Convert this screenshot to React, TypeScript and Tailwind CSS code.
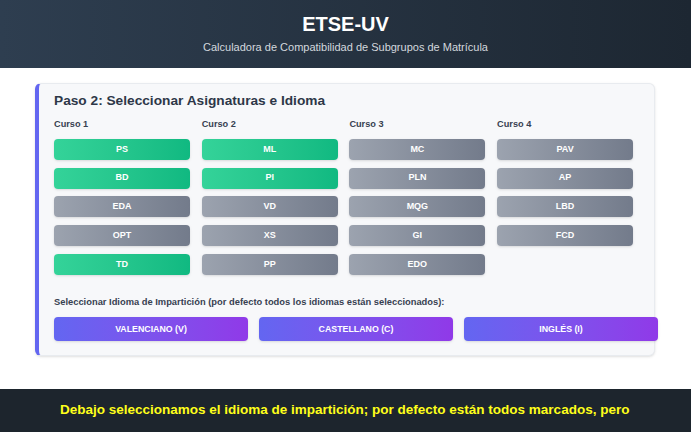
import React from 'react';

type Subject = { code: string; selected: boolean };

const cursos: { name: string; subjects: Subject[] }[] = [
  {
    name: 'Curso 1',
    subjects: [
      { code: 'PS', selected: true },
      { code: 'BD', selected: true },
      { code: 'EDA', selected: false },
      { code: 'OPT', selected: false },
      { code: 'TD', selected: true },
    ],
  },
  {
    name: 'Curso 2',
    subjects: [
      { code: 'ML', selected: true },
      { code: 'PI', selected: true },
      { code: 'VD', selected: false },
      { code: 'XS', selected: false },
      { code: 'PP', selected: false },
    ],
  },
  {
    name: 'Curso 3',
    subjects: [
      { code: 'MC', selected: false },
      { code: 'PLN', selected: false },
      { code: 'MQG', selected: false },
      { code: 'GI', selected: false },
      { code: 'EDO', selected: false },
    ],
  },
  {
    name: 'Curso 4',
    subjects: [
      { code: 'PAV', selected: false },
      { code: 'AP', selected: false },
      { code: 'LBD', selected: false },
      { code: 'FCD', selected: false },
    ],
  },
];

const idiomas = ['VALENCIANO (V)', 'CASTELLANO (C)', 'INGLÉS (I)'];

export default function App() {
  const selectedClass =
    'h-[21px] w-full rounded-[4px] bg-gradient-to-r from-[#34d399] to-[#10b981] text-white text-[9px] font-bold flex items-center justify-center shadow-sm';
  const unselectedClass =
    'h-[21px] w-full rounded-[4px] bg-gradient-to-r from-[#9ca3af] to-[#737b8b] text-white text-[9px] font-bold flex items-center justify-center shadow-sm';

  return (
    <div className="w-[691px] h-[432px] bg-white flex flex-col overflow-hidden" style={{ fontFamily: '"Liberation Sans", Arial, sans-serif' }}>
      {/* Header */}
      <header className="h-[68px] bg-gradient-to-r from-[#2e3e50] to-[#1d2732] flex flex-col items-center justify-center">
        <h1 className="text-white text-[20px] font-bold leading-none -mt-[1px]">ETSE-UV</h1>
        <p className="text-[#d3d8de] text-[11px] mt-[8px] leading-none">
          Calculadora de Compatibilidad de Subgrupos de Matrícula
        </p>
      </header>

      {/* Paso 2 card */}
      <div className="pt-[15px] pl-[35px]">
        <section className="w-[620px] h-[273px] bg-[#f7f8fa] rounded-[6px] border border-[#e8ebef] border-l-[4px] border-l-[#6366f1] shadow-sm pl-[15px] pt-[10px]">
          <h3 className="text-[13.7px] font-bold text-[#2d3748] leading-none">
            Paso 2: Seleccionar Asignaturas e Idioma
          </h3>

          <div className="grid grid-cols-[136px_136px_136px_136px] gap-x-[11.7px] mt-[12px]">
            {cursos.map(curso => (
              <div key={curso.name} className="flex flex-col">
                <div className="text-[9.2px] font-bold text-[#374151] leading-none mb-[10px]">{curso.name}</div>
                <div className="flex flex-col gap-[7.75px]">
                  {curso.subjects.map(s => (
                    <button key={s.code} className={s.selected ? selectedClass : unselectedClass}>
                      {s.code}
                    </button>
                  ))}
                </div>
              </div>
            ))}
          </div>

          {/* Idioma */}
          <div className="mt-[23px] text-[9.35px] font-bold text-[#374151] leading-none">
            Seleccionar Idioma de Impartición (por defecto todos los idiomas están seleccionados):
          </div>
          <div className="flex gap-[11px] mt-[10px]">
            {idiomas.map(i => (
              <button
                key={i}
                className="shrink-0 w-[194px] h-[24px] rounded-[4px] bg-gradient-to-r from-[#6366f1] to-[#9039e8] text-white text-[8.8px] font-bold flex items-center justify-center shadow-sm"
              >
                {i}
              </button>
            ))}
          </div>
        </section>
      </div>

      <div className="flex-1" />

      {/* Subtitle bar */}
      <footer className="h-[43px] bg-[#1d252d] flex items-center pl-[60px]">
        <span className="text-[#ffff1a] text-[13.5px] font-bold">
          Debajo seleccionamos el idioma de impartición; por defecto están todos marcados, pero
        </span>
      </footer>
    </div>
  );
}
